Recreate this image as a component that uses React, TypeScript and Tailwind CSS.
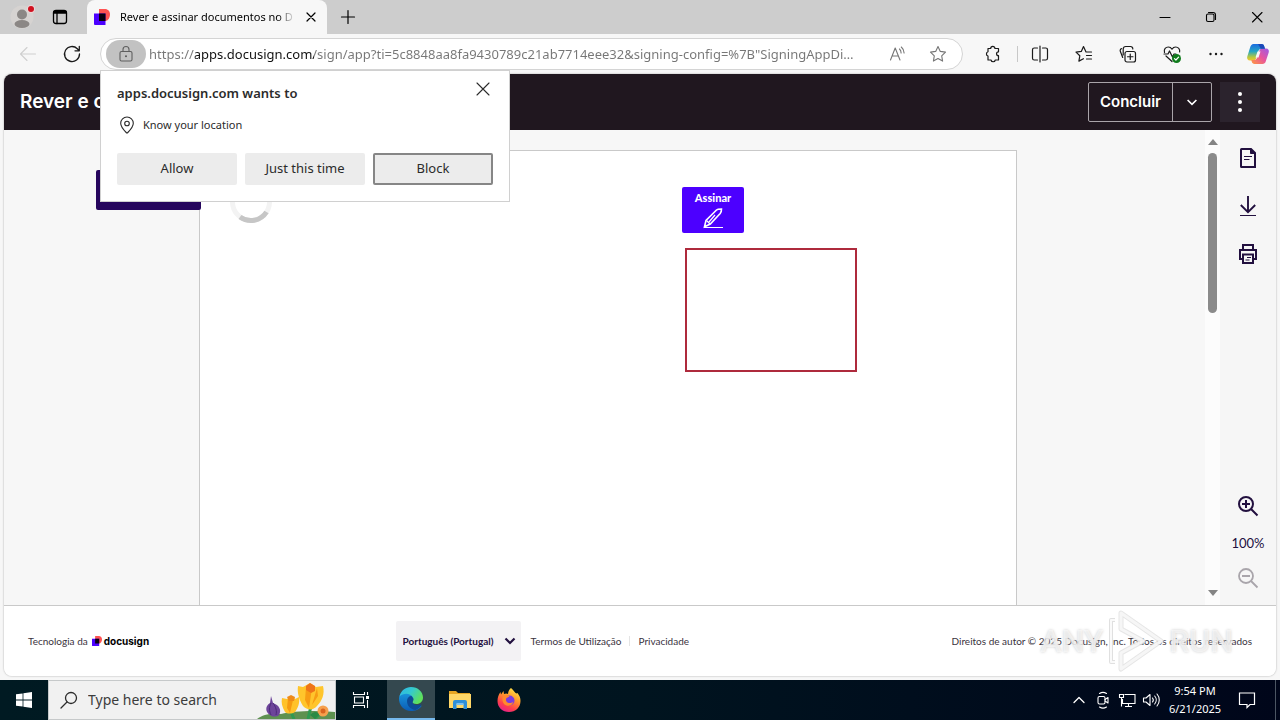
import type { ReactNode, SVGProps } from "react";

type IconProps = SVGProps<SVGSVGElement> & { children: ReactNode };

function Icon({ children, ...rest }: IconProps) {
  return (
    <svg
      width="20"
      height="20"
      viewBox="0 0 20 20"
      fill="none"
      stroke="currentColor"
      strokeWidth="1.1"
      strokeLinecap="round"
      strokeLinejoin="round"
      aria-hidden="true"
      className="shrink-0"
      {...rest}
    >
      {children}
    </svg>
  );
}

function DocusignMark({ size }: { size: number }) {
  return (
    <svg width={size} height={size} viewBox="0 0 16 16" aria-hidden="true" className="shrink-0">
      <path d="M5 0h6C14 0 16 2.300 16 5.500S14 12 11 12H5z" fill="#ff5252" />
      <path d="M0 4.500h11.500v11.500H1a1 1 0 0 1-1-1z" fill="#4c00ff" />
      <path d="M5 4.500h6.500V12H5z" fill="#0a0010" />
    </svg>
  );
}

function TabStrip() {
  return (
    <div className="flex h-[34px] shrink-0 bg-[#cdcdcd] text-black">
      <button aria-label="Profile" className="flex w-11 items-center justify-center">
        <svg width="28" height="28" viewBox="0 0 28 28" aria-hidden="true">
          <circle cx="14" cy="14" r="11.500" fill="#d6d3d1" />
          <circle cx="14" cy="11.500" r="5" fill="#8b8785" />
          <ellipse cx="14" cy="21" rx="7.500" ry="4" fill="#8b8785" />
          <circle cx="23" cy="6" r="4" fill="#ecd5d6" />
          <circle cx="23" cy="6" r="3" fill="#d0111f" />
        </svg>
      </button>
      <button aria-label="Tab actions" className="flex w-8 items-center justify-center">
        <Icon strokeWidth="1.300">
          <rect x="3.500" y="3.500" width="13" height="13" rx="2.500" />
          <path d="M3.500 6h13M7 6v10.500" />
          <path d="M4 5h12" strokeWidth="2" />
        </Icon>
      </button>
      <div className="ml-[11px] flex w-60 items-center rounded-t-lg bg-[#f7f7f7] pl-[7px] pr-1">
        <DocusignMark size={16} />
        <span className="ml-2.5 w-[178px] whitespace-nowrap text-[11px] [mask-image:linear-gradient(to_right,black_90%,transparent)]">
          Rever e assinar documentos no D
        </span>
        <button aria-label="Close tab" className="ml-1 flex size-6 items-center justify-center">
          <Icon width="16" height="16" strokeWidth="1.500">
            <path d="M5 5l10 10M15 5L5 15" />
          </Icon>
        </button>
      </div>
      <button aria-label="New tab" className="flex w-[42px] items-center justify-center">
        <Icon strokeWidth="1.200">
          <path d="M10 3.500v13M3.500 10h13" />
        </Icon>
      </button>
      <div className="ml-auto flex">
        <button aria-label="Minimize" className="flex w-[46px] items-center justify-center">
          <Icon>
            <path d="M5 10.500h10" />
          </Icon>
        </button>
        <button aria-label="Restore" className="flex w-[46px] items-center justify-center">
          <Icon>
            <rect x="5.500" y="7" width="7.500" height="7.500" rx="1.500" />
            <path d="M7.500 5.500H12A2.500 2.500 0 0 1 14.500 8v4.500" />
          </Icon>
        </button>
        <button aria-label="Close" className="flex w-[46px] items-center justify-center">
          <Icon>
            <path d="M5.500 5.500l9.500 9.500M15 5.500L5.500 15" />
          </Icon>
        </button>
      </div>
    </div>
  );
}

function PermissionPrompt() {
  return (
    <div
      role="dialog"
      aria-label="apps.docusign.com wants to"
      className="absolute -left-px top-full z-20 mt-px w-[410px] border border-[#d0d0d0] bg-white px-4 pb-4 pt-2 text-[#2b2b2b]"
    >
      <div className="flex items-start justify-between">
        <h2 className="pt-1 text-[13px] font-semibold leading-5">apps.docusign.com wants to</h2>
        <button aria-label="Close prompt" className="flex size-5 items-center justify-center">
          <Icon>
            <path d="M4 4l12 12M16 4L4 16" />
          </Icon>
        </button>
      </div>
      <p className="mt-3 flex h-5 items-center gap-1.5 text-[11px]">
        <Icon>
          <path d="M10 2a6.300 6.300 0 0 1 6.300 6.300c0 3.200-2.500 6.200-5.500 9.200a1.100 1.100 0 0 1-1.600 0c-3-3-5.500-6-5.500-9.200A6.300 6.300 0 0 1 10 2z" />
          <circle cx="10" cy="8.500" r="2.300" />
        </Icon>
        Know your location
      </p>
      <div className="mt-[18px] grid grid-cols-3 gap-2 text-[13px]">
        <button className="h-8 rounded-xs bg-[#ececec]">Allow</button>
        <button className="h-8 rounded-xs bg-[#ececec]">Just this time</button>
        <button className="h-8 rounded-xs border-2 border-[#868686] bg-[#ececec]">Block</button>
      </div>
    </div>
  );
}

function ToolButton({ label, children }: { label: string; children: ReactNode }) {
  return (
    <button aria-label={label} className="flex w-11 items-center justify-center">
      {children}
    </button>
  );
}

function AddressRow() {
  return (
    <div className="flex h-10 shrink-0 bg-[#f7f7f7] pl-1.5 text-[#1a1a1a]">
      <button aria-label="Back" className="flex w-11 items-center justify-center text-[#cfcfcf]">
        <Icon>
          <path d="M17.500 10h-15M9 3.500L2.500 10L9 16.500" />
        </Icon>
      </button>
      <ToolButton label="Refresh">
        <Icon strokeWidth="1.300">
          <path d="M17.500 10a7.500 7.500 0 1 1-2.200-5.300L17 6.500M17.300 2.500v4.300h-4.300" />
        </Icon>
      </ToolButton>
      <div className="relative ml-1.5 mt-1 flex h-8 min-w-0 flex-1 items-center rounded-full border border-[#d4d4d4] bg-white pl-[5px] pr-1 text-[#767676]">
        <button
          aria-label="View site information"
          className="flex h-7 w-10 shrink-0 items-center justify-center rounded-full bg-[#c2c2c2] text-[#5f5f5f]"
        >
          <Icon>
            <rect x="4" y="7.500" width="12" height="9.500" rx="1.500" />
            <path d="M7 7.500V5.500a3 3 0 0 1 6 0v2" />
            <circle cx="10" cy="12.200" r="0.500" fill="currentColor" />
          </Icon>
        </button>
        <input
          aria-label="Address and search bar"
          readOnly
          value={
            'https://apps.docusign.com/sign/app?ti=5c8848aa8fa9430789c21ab7714eee32&signing-config=%7B"SigningAppDi…'
          }
          className="ml-[3px] h-6 min-w-0 flex-1 bg-[linear-gradient(to_right,#767676_46px,#111_46px,#111_165px,#767676_165px)] bg-clip-text text-[13px] text-transparent outline-none"
        />
        <button aria-label="Read aloud" className="flex w-10 shrink-0 items-center justify-center">
          <Icon>
            <path d="M2.500 16L7.200 4L12 16M4.100 12h6.300M11.500 5c1 1 1.600 2.300 1.600 4M13.300 3c1.800 1.600 2.800 3.700 2.800 6" />
          </Icon>
        </button>
        <button aria-label="Add to favorites" className="flex w-10 shrink-0 items-center justify-center">
          <Icon>
            <path d="M10 2.500l2.300 4.900 5.200.7-3.800 3.700.9 5.300L10 14.600l-4.600 2.500.9-5.300L2.500 8.100l5.200-.7z" />
          </Icon>
        </button>
        <PermissionPrompt />
      </div>
      <div className="ml-1.5 flex">
        <button aria-label="Extensions" className="flex w-12 items-center justify-center">
          <Icon strokeWidth="1.200">
            <path d="M5 4.500h2.700a2.100 2.100 0 0 1 4.200 0h3.600v3.300a1.800 1.800 0 1 0 0 3.900v4.300h-3.200a2.200 2.200 0 0 1-4.300 0H5v-4a2.200 2.200 0 0 1 0-4.200z" />
          </Icon>
        </button>
        <span className="my-auto h-4 w-px bg-[#c8c8c8]" />
        <ToolButton label="Split screen">
          <Icon strokeWidth="1.200">
            <path d="M10 2v16M7.500 4H4.300A1.800 1.800 0 0 0 2.500 5.800v8.400A1.800 1.800 0 0 0 4.300 16h3.200M12.500 4h3.200a1.800 1.800 0 0 1 1.800 1.800v8.400a1.800 1.800 0 0 1-1.800 1.800h-3.200" />
          </Icon>
        </ToolButton>
        <ToolButton label="Favorites">
          <Icon strokeWidth="1.200">
            <path d="M17.500 8h-5.500L9.500 2.500L7.300 7.400l-5.300.7 3.800 3.700-.9 5.300 4.500-2.400M12.500 11.500h5M12.500 15h5" />
          </Icon>
        </ToolButton>
        <ToolButton label="Collections">
          <Icon strokeWidth="1.200">
            <rect x="7" y="7.500" width="10.500" height="10.500" rx="2" />
            <path d="M12.250 10v5.500M9.500 12.750h5.500M4.700 13.500L2.300 7.200a2 2 0 0 1 1.200-2.600M5.200 11V5A2.500 2.500 0 0 1 7.700 2.500h4.800A2.300 2.300 0 0 1 14.800 5" />
          </Icon>
        </ToolButton>
        <ToolButton label="Browser essentials">
          <Icon strokeWidth="1.200">
            <path d="M2.500 8.500C1.500 5 4 3 6.300 3c1.700 0 2.900.9 3.700 2.200C10.800 3.900 12 3 13.700 3c2.300 0 4.600 2 3.900 5M4 12l6 5.500M2 10h4l1.500-3 3 6 1.500-3h2" />
            <circle cx="14.500" cy="14.500" r="4.500" fill="#0f7b1c" stroke="none" />
            <path d="M12.500 14.600l1.400 1.400 2.700-2.800" stroke="white" />
          </Icon>
        </ToolButton>
        <ToolButton label="Settings and more">
          <Icon fill="currentColor" stroke="none">
            <circle cx="4.500" cy="10" r="1.200" />
            <circle cx="10" cy="10" r="1.200" />
            <circle cx="15.500" cy="10" r="1.200" />
          </Icon>
        </ToolButton>
        <button aria-label="Copilot" className="flex w-[42px] items-center justify-center pr-0.5">
          <svg width="24" height="24" viewBox="0 0 24 24" aria-hidden="true">
            <defs>
              <linearGradient id="cpA" x1="0" y1="0" x2="0" y2="1">
                <stop offset="0" stopColor="#1b6be0" />
                <stop offset=".45" stopColor="#25a6c4" />
                <stop offset=".8" stopColor="#b8c93d" />
                <stop offset="1" stopColor="#f4c430" />
              </linearGradient>
              <linearGradient id="cpB" x1="1" y1="0" x2="0" y2="1">
                <stop offset="0" stopColor="#9b5be8" />
                <stop offset=".5" stopColor="#e9559c" />
                <stop offset="1" stopColor="#ff9b3d" />
              </linearGradient>
            </defs>
            <path d="M7.500 2h8c1.500 0 2.300.9 2.700 2.200l.8 2.800h-4c-1.500 0-2.200.8-2.600 2L10.200 16c-.5 1.600-1.400 2.500-3 2.500H4c-2.300 0-3.400-1.700-2.700-4l2.800-9C4.800 3.200 5.800 2 7.500 2z" fill="url(#cpA)" />
            <path d="M16.500 22h-8c-1.500 0-2.300-.9-2.700-2.200L5.300 18H8c1.800 0 2.600-.9 3-2.200L13.300 9c.5-1.700 1.400-2.500 3-2.500H20c2.300 0 3.400 1.700 2.700 4l-2.800 8.500c-.7 2.200-1.700 3-3.400 3z" fill="url(#cpB)" />
            <path d="M12 2h3.500c1.500 0 2.300.9 2.700 2.200l.8 2.600h-4.200z" fill="#1b49b8" />
            <path d="M11.500 9.500h3l-2 6h-3z" fill="#f7f7f7" />
          </svg>
        </button>
      </div>
    </div>
  );
}

function SigningHeader() {
  return (
    <header className="flex h-14 shrink-0 items-center bg-[#20171f] px-4 text-white">
      <h1 className="text-[19px] font-semibold">Rever e concluir</h1>
      <div className="ml-auto flex h-10 rounded-xs border border-[#a9a4a9]">
        <button className="w-[83px] text-[15px] font-semibold">Concluir</button>
        <button
          aria-label="Mais opções de conclusão"
          className="flex w-[39px] items-center justify-center border-l border-[#a9a4a9]"
        >
          <Icon width="16" height="16" strokeWidth="2" strokeLinecap="butt" strokeLinejoin="miter">
            <path d="M4.500 7.500l5.500 5.500 5.500-5.500" />
          </Icon>
        </button>
      </div>
      <button aria-label="Outras ações" className="ml-2 flex size-10 items-center justify-center bg-[#2b232d]">
        <Icon width="24" height="24" fill="currentColor" stroke="none">
          <circle cx="10" cy="3.300" r="1.700" />
          <circle cx="10" cy="10" r="1.700" />
          <circle cx="10" cy="16.700" r="1.700" />
        </Icon>
      </button>
    </header>
  );
}

function DocumentPane() {
  return (
    <main className="min-w-0 flex-1 pl-[7px] pt-5">
      <div className="relative mx-auto h-full w-full max-w-[818px] border border-b-0 border-[#c9c9c9] bg-white">
        <div className="absolute -left-[104px] top-[19px] h-10 w-[105px] rounded-xs bg-[#26065d]" />
        <svg width="44" height="44" viewBox="0 0 44 44" className="absolute left-[29px] top-[29px]" role="img" aria-label="A carregar">
          <circle cx="22" cy="22" r="18.500" fill="none" stroke="#f3f3f3" strokeWidth="5" />
          <path d="M37.500 32A18.500 18.500 0 0 1 11 37" fill="none" stroke="#c6c6c6" strokeWidth="5" />
        </svg>
        <button className="absolute left-[482px] top-9 flex h-[46px] w-[62px] flex-col items-center rounded-xs bg-[#4c00ff] pt-1 text-white">
          <span className="font-['Lato',sans-serif] text-[11px] font-black leading-[14px]">Assinar</span>
          <svg width="22" height="22" viewBox="0 0 22 22" fill="none" stroke="currentColor" strokeWidth="1.600" aria-hidden="true" className="mt-0.5">
            <path d="M2 20.500h19" strokeWidth="1.200" />
            <path d="M2.500 19.800l1.500-6.300L14.500 3c1-1 2.500-1 5-1 0 2.500-.4 3.500-1.300 4.500L8.300 17z" />
            <path d="M4.500 13.500l3.500 3.500M7 15l6-7" strokeWidth="1.200" />
          </svg>
        </button>
        <div className="absolute left-[485px] top-[97px] h-[124px] w-[172px] border-2 border-[#ae2a3c]" />
      </div>
    </main>
  );
}

function ScrollTrack() {
  return (
    <div className="flex w-[15px] flex-col items-center bg-[#fcfcfc] py-[9px]" aria-hidden="true">
      <svg width="10" height="6" viewBox="0 0 10 6" fill="#858585">
        <path d="M0 6L5 0l5 6z" />
      </svg>
      <div className="mt-2 h-40 w-[9px] rounded-full bg-[#8b8b8b]" />
      <svg width="10" height="6" viewBox="0 0 10 6" fill="#858585" className="mt-auto">
        <path d="M0 0l5 6 5-6z" />
      </svg>
    </div>
  );
}

function SideTools() {
  return (
    <aside className="flex w-14 flex-col items-center bg-[#f6f6f6] pt-1 text-[#22103f]">
      <button aria-label="Páginas" className="flex size-12 items-center justify-center">
        <Icon width="24" height="24" viewBox="0 0 24 24" strokeWidth="2" strokeLinecap="butt" strokeLinejoin="miter">
          <path d="M5.500 3h9.500l4 4v14H5.500a.500.500 0 0 1-.500-.500v-17a.500.500 0 0 1 .500-.500z" />
          <path d="M14.500 3v4.500H19z" fill="currentColor" strokeWidth="1" />
          <path d="M8 10.500h8M8 13.500h5.500" strokeWidth="1.200" />
        </Icon>
      </button>
      <button aria-label="Transferir" className="flex size-12 items-center justify-center">
        <Icon width="24" height="24" viewBox="0 0 24 24" strokeWidth="1.900" strokeLinecap="butt" strokeLinejoin="miter">
          <path d="M12 2v16M4.800 11l7.200 7.200L19.200 11" />
          <path d="M4 21.500h16" strokeWidth="1.200" />
        </Icon>
      </button>
      <button aria-label="Imprimir" className="flex size-12 items-center justify-center">
        <Icon width="24" height="24" viewBox="0 0 24 24" strokeWidth="2" strokeLinecap="butt" strokeLinejoin="miter">
          <path d="M7 8V3h10v5M7 17H4V8h16v9h-3" />
          <path d="M7 12.500h10V21H7z" />
          <path d="M11 15.500h4M9.500 18h4" strokeWidth="1.100" />
        </Icon>
      </button>
      <button aria-label="Ampliar" className="mt-auto flex size-10 items-center justify-center">
        <Icon width="24" height="24" viewBox="0 0 24 24" strokeWidth="2" strokeLinecap="butt">
          <circle cx="10" cy="10" r="7" />
          <path d="M15 15l6.500 6.500M10 6v8M6 10h8" />
        </Icon>
      </button>
      <span className="pb-[7px] pt-[9px] font-['Lato',sans-serif] text-[13px] leading-4">100%</span>
      <button aria-label="Reduzir" className="mb-[7px] flex size-10 items-center justify-center text-[#a9a5ab]">
        <Icon width="24" height="24" viewBox="0 0 24 24" strokeWidth="1.800" strokeLinecap="butt">
          <circle cx="10" cy="10" r="7" />
          <path d="M15 15l6.500 6.500M6 10h8" />
        </Icon>
      </button>
    </aside>
  );
}

function Watermark() {
  return (
    <div
      aria-hidden="true"
      className="pointer-events-none absolute right-[43px] top-0 flex h-[70px] items-center gap-1 font-['Roboto',sans-serif] text-[32px] font-medium text-white/60 [text-shadow:0_0_3px_#ccc]"
    >
      <span>ANY</span>
      <svg width="58" height="64" viewBox="0 0 58 64" fill="none" strokeLinejoin="round">
        <path d="M14 4l40 28-40 28V44l22-12-22-12z" stroke="#e0e0e0" strokeOpacity=".8" strokeWidth="5" />
        <path d="M14 4l40 28-40 28V44l22-12-22-12z" stroke="#fafafa" strokeOpacity=".8" strokeWidth="3" />
        <path d="M8 11H4v42h4" stroke="#e0e0e0" strokeWidth="4" />
        <path d="M8 11H4v42h4" stroke="#fafafa" strokeWidth="2" />
      </svg>
      <span>RUN</span>
    </div>
  );
}

function SigningFooter() {
  return (
    <footer className="relative flex h-[71px] shrink-0 items-center justify-between border-t border-[#c9c9c9] bg-white px-6 font-['Lato',sans-serif] text-[10px] text-[#3a3340]">
      <div className="flex items-center gap-1">
        Tecnologia da
        <span className="flex items-center gap-0.5 text-black">
          <DocusignMark size={10} />
          <span className="font-['Inter',sans-serif] font-bold">docusign</span>
        </span>
      </div>
      <div className="mr-4 flex items-center">
        <div className="relative">
          <select
            aria-label="Idioma"
            className="h-10 w-[125px] appearance-none rounded-xs bg-[#f3f2f4] pl-[7px] font-bold text-[#22103f]"
          >
            <option>Português (Portugal)</option>
          </select>
          <Icon
            width="12"
            height="12"
            viewBox="0 0 12 12"
            strokeWidth="2.200"
            strokeLinecap="butt"
            strokeLinejoin="miter"
            className="pointer-events-none absolute right-[5px] top-3.5 text-[#22103f]"
          >
            <path d="M1.500 3.500L6 8l4.500-4.500" />
          </Icon>
        </div>
        <a href="#termos" className="ml-2.5">
          Termos de Utilização
        </a>
        <span className="ml-2 h-2.5 w-px bg-[#e4e4e4]" />
        <a href="#privacidade" className="ml-2">
          Privacidade
        </a>
      </div>
      <p>Direitos de autor © 2025 Docusign, Inc. Todos os direitos reservados</p>
      <Watermark />
    </footer>
  );
}

function Flowers() {
  return (
    <svg width="78" height="38" viewBox="0 0 78 38" aria-hidden="true" className="shrink-0 self-end">
      <path d="M0 38c6-5 14-6 24-5 12-3 34-4 54-2v7z" fill="#5e9150" />
      <path d="M13 34c-5-3-5-9 0-12l1-7 2 7c6 2 9 7 6 12-2 2-7 2-9 0z" fill="#6d449a" />
      <path d="M14 22c-2 4-2 8 0 12M16 22c3 4 4 8 3 12" stroke="#4b2a78" fill="none" />
      <path d="M34 31l3 7M54 25l-3 13M58 38l8-9" stroke="#2f9a52" strokeWidth="3" fill="none" />
      <path d="M28 31c-3-5-4-10-3-14l5 1 4-3 4 3 4-2c1 6-1 11-4 15-3 2-8 2-10 0z" fill="#ffc22a" />
      <path d="M31 17l-1 10 3 5 3-13z" fill="#f59a12" />
      <path d="M30 16l4-2 4 2-1 4h-5z" fill="#ee8a19" />
      <path d="M46 25c-4-7-6-13-5-20l5 1 7-4 6 4 7-1c2 8-1 15-6 20-4 5-10 4-14 0z" fill="#ffc52c" />
      <path d="M49 6l-1 13 4 8 3-20zM60 7l-5 17 6-9z" fill="#f79c14" />
      <path d="M49 5l4-3 5 3v5l-4 2-5-3z" fill="#ee7419" />
      <circle cx="66" cy="30" r="5.500" fill="#f6a04d" />
      <circle cx="66" cy="30" r="2.500" fill="#d9641f" />
      <path d="M53 34c4-4 8-4 9 0l-4 4z" fill="#2b8a45" />
    </svg>
  );
}

function EdgeLogo() {
  return (
    <svg width="26" height="26" viewBox="0 0 26 26" aria-hidden="true">
      <defs>
        <linearGradient id="edgeTop" x1="0" y1="0" x2="1" y2=".5">
          <stop offset="0" stopColor="#2cb5e8" />
          <stop offset=".5" stopColor="#35c9cf" />
          <stop offset="1" stopColor="#5fe05a" />
        </linearGradient>
        <linearGradient id="edgeLow" x1="0" y1="0" x2="0" y2="1">
          <stop offset="0" stopColor="#1b9be0" />
          <stop offset="1" stopColor="#0b5cb5" />
        </linearGradient>
      </defs>
      <path d="M1 12C2 6 7 4 11 5c4 .8 6 4 5 7-3 1-3 5 0 7s6 1.500 8 .5C21 24 17 25 13 25 6 25 .500 19 1 12z" fill="url(#edgeLow)" />
      <path d="M1.500 10.500C3 4.500 7.500 1 13 1c7 0 12 5 12 10.500 0 4-3 6.500-6.500 6.500-3 0-4.500-1-4-2.200 1.200-1.600 1.200-3 .5-4.300C12.500 7 5.500 6.500 1.500 10.500z" fill="url(#edgeTop)" />
      <path d="M9 15c0-3 2-5 4.500-5 2 2 2.200 4 1 5.800-.5 1.700 2 3.400 5 3.200 1.500-.1 2.700-.4 4-1-1 2.800-3.500 5-6 6-4.500-.500-8.500-4-8.500-9z" fill="#0d4a96" />
    </svg>
  );
}

function ExplorerLogo() {
  return (
    <svg width="24" height="22" viewBox="0 0 24 22" aria-hidden="true">
      <path d="M1 2h7l2 2h12v4H1z" fill="#e7a623" />
      <path d="M1 5h22v14H1z" fill="#ffd767" />
      <path d="M5 13a2 2 0 0 1 2-2h10a2 2 0 0 1 2 2v7h-3.500v-5h-7v5H5z" fill="#2f8fd8" />
      <path d="M8.500 14h7v2h-7z" fill="#7cc0ee" />
    </svg>
  );
}

function FirefoxLogo() {
  return (
    <svg width="26" height="26" viewBox="0 0 26 26" aria-hidden="true">
      <defs>
        <linearGradient id="fx" x1=".8" y1="0" x2=".3" y2="1">
          <stop offset="0" stopColor="#ffe94a" />
          <stop offset=".4" stopColor="#ff9a2a" />
          <stop offset=".75" stopColor="#ff3f4b" />
          <stop offset="1" stopColor="#e6208a" />
        </linearGradient>
      </defs>
      <path d="M15 1c2 1.500 3 3.500 4.500 5 1 .5 1.500.5 2 0 2 2.500 3 5 3 8 0 6.500-5 11-11.500 11S1.500 20.500 1.500 14c0-3.500 1-6.500 3-9l.5 2.500L7.500 4l.5 3c1.500-.7 3-.7 4 0C12 4.500 13.500 2 15 1z" fill="url(#fx)" />
      <circle cx="13.500" cy="13.500" r="5" fill="#7a3be0" />
      <path d="M7 9c2-1 5-1 6.500.500l-3 1.500c-1 1.500-.5 4 1.500 4.800 2 .8 4 0 5.500-1.300-1 3.500-4 5-7 4-3.500-1.200-5-5.500-3.500-9.500z" fill="#ff8a2c" />
    </svg>
  );
}

function Taskbar() {
  return (
    <nav
      aria-label="Taskbar"
      className="flex h-10 shrink-0 bg-linear-to-r from-[#001a22] via-[#00141f] to-[#00061a] text-white"
    >
      <button aria-label="Start" className="flex w-12 items-center justify-center">
        <svg width="16" height="16" viewBox="0 0 16 16" fill="white" aria-hidden="true">
          <path d="M0 2.300L6.600 1.400v6.200H0zM7.400 1.300L16 0v7.600H7.400zM0 8.400h6.600v6.200L0 13.700zM7.400 8.400H16V16l-8.600-1.300z" />
        </svg>
      </button>
      <label className="flex w-72 items-center border border-[#c6c9ca] bg-[#f1f1f1] pl-2.5 text-[#2c2c2c]">
        <Icon>
          <circle cx="12" cy="8" r="5.500" strokeWidth="1.300" />
          <path d="M8 12l-6 6" strokeWidth="1.300" />
        </Icon>
        <input
          aria-label="Search"
          placeholder="Type here to search"
          className="ml-[9px] min-w-0 flex-1 bg-transparent text-sm outline-none placeholder:text-[#3c3c3c]"
        />
        <Flowers />
      </label>
      <button aria-label="Task view" className="flex w-[51px] items-center justify-center">
        <Icon strokeLinecap="butt" strokeLinejoin="miter">
          <path d="M1.500 2v2.500h11V2M1.500 18v-2.500h11V18M2.500 7h9v6h-9zM15.500 2v3M15.500 10v8" />
          <path d="M14 6h3v3h-3z" fill="currentColor" stroke="none" />
        </Icon>
      </button>
      <button
        aria-label="Microsoft Edge"
        className="flex w-12 items-center justify-center border-b-2 border-[#76b9ed] bg-[#34484f]"
      >
        <EdgeLogo />
      </button>
      <button aria-label="File Explorer" className="flex w-[49px] items-center justify-center">
        <ExplorerLogo />
      </button>
      <button aria-label="Firefox" className="flex w-[49px] items-center justify-center">
        <FirefoxLogo />
      </button>
      <div className="ml-auto flex items-center">
        <button aria-label="Show hidden icons" className="flex w-6 justify-center">
          <Icon>
            <path d="M5 12.500l5-5 5 5" strokeWidth="1.300" />
          </Icon>
        </button>
        <button aria-label="Meet now" className="flex w-6 justify-center">
          <Icon>
            <rect x="5" y="6.500" width="7" height="7.500" rx="1.500" />
            <path d="M12 9.500l3-2v5.500l-3-2M6.500 3.500c2-1.300 5-1.300 7 0M6.500 17c2 1.300 5 1.300 7 0" />
          </Icon>
        </button>
        <button aria-label="Network" className="flex w-6 justify-center">
          <Icon strokeLinecap="butt" strokeLinejoin="miter">
            <path d="M7.500 4.500H18v9H5.500V9M11.500 13.500v3M8 16.500h7M2.500 4.500h4v3h-4zM4.500 7.500v9" />
          </Icon>
        </button>
        <button aria-label="Volume" className="flex w-6 justify-center">
          <Icon>
            <path d="M2.500 8v4h2.500l4 3.500v-11L5 8zM11.500 8c1 1.200 1 2.800 0 4M13.700 6c2 2.300 2 5.700 0 8M16 4c3 3.400 3 8.600 0 12" />
          </Icon>
        </button>
        <div className="w-16 text-center text-[11px] leading-[18px]">
          <div>9:54 PM</div>
          <div>6/21/2025</div>
        </div>
        <button aria-label="Notifications" className="flex w-10 justify-center">
          <Icon strokeLinejoin="miter">
            <path d="M2.500 3h15v11.500h-4.500L10 17.500v-3H2.500z" strokeWidth="1.200" />
          </Icon>
        </button>
        <span className="ml-2 mr-1 h-10 w-px bg-[#4c5663]" />
      </div>
    </nav>
  );
}

export default function App() {
  return (
    <div className="flex h-screen flex-col overflow-hidden bg-[#f7f7f7] font-['Noto_Sans',sans-serif]">
      <TabStrip />
      <AddressRow />
      <div className="mx-1 mb-1 flex min-h-0 flex-1 flex-col overflow-hidden rounded-lg bg-[#f7f7f7] font-['Inter',sans-serif] shadow-[0_0_2px_rgba(0,0,0,0.35)]">
        <SigningHeader />
        <div className="flex min-h-0 flex-1">
          <DocumentPane />
          <ScrollTrack />
          <SideTools />
        </div>
        <SigningFooter />
      </div>
      <Taskbar />
    </div>
  );
}
